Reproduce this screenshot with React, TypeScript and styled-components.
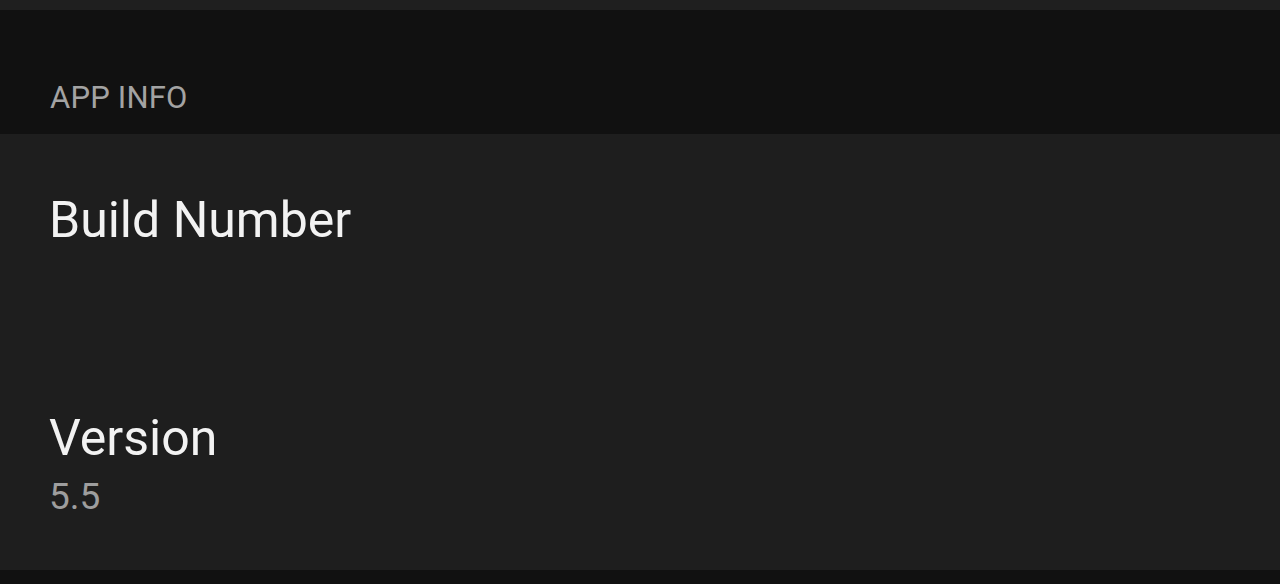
import styled, { createGlobalStyle } from "styled-components";

const GlobalStyle = createGlobalStyle`
  *{box-sizing:border-box}
  html,body{margin:0;padding:0;background:#111111;font-family:Roboto,'Noto Sans',sans-serif;}
`;

const Screen = styled.div`display:flex; flex-direction:column; min-height:584px; background:#111111;`;
const TopStrip = styled.div`height:10px; background:#1f1f1f;`;
const SectionHeader = styled.div`
  padding:70px 50px 18px;
  font-size:31px; line-height:36px; color:#a3a3a3;
  letter-spacing:0.2px;
`;
const Card = styled.div`background:#1e1e1e; display:flex; flex-direction:column;`;
const Item = styled.div`padding:58px 49px 54px; display:flex; flex-direction:column;`;
const Title = styled.div`font-size:50px; line-height:56px; color:#f2f2f2;`;
const Value = styled.div`margin-top:11px; min-height:39px; font-size:37px; line-height:39px; color:#9e9e9e;`;

const rows = [
  { title: "Build Number", value: "" },
  { title: "Version", value: "5.5" },
];

export default function App() {
  return (
    <>
      <GlobalStyle />
      <Screen>
        <TopStrip />
        <SectionHeader>APP INFO</SectionHeader>
        <Card>
          {rows.map((r) => (
            <Item key={r.title}>
              <Title>{r.title}</Title>
              <Value>{r.value}</Value>
            </Item>
          ))}
        </Card>
      </Screen>
    </>
  );
}
